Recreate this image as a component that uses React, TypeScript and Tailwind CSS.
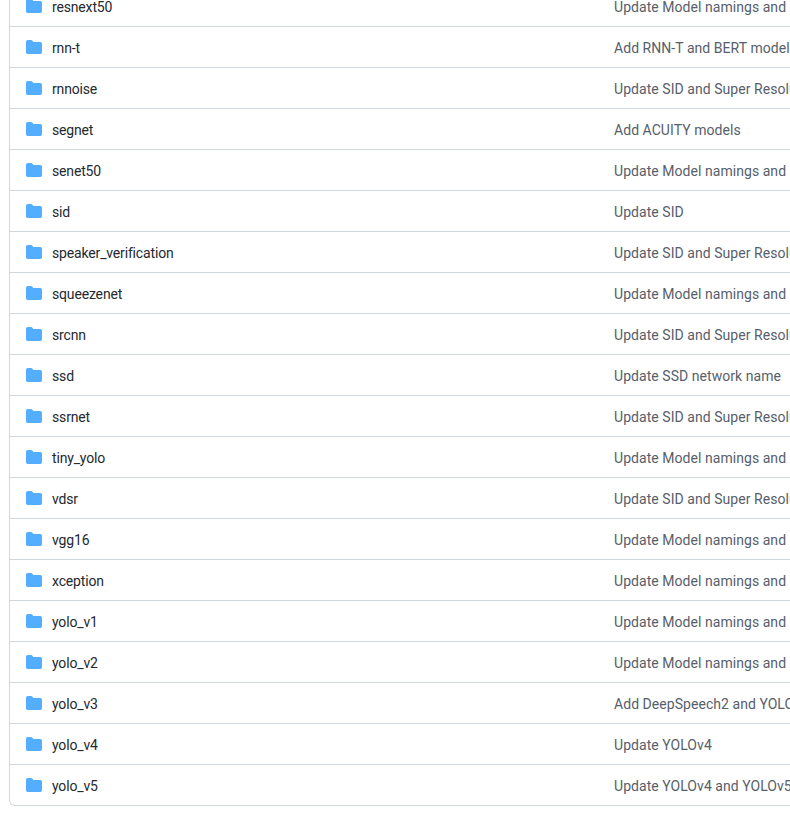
const rows: [string, string][] = [
  ["resnext50", "Update Model namings and links"],
  ["rnn-t", "Add RNN-T and BERT models"],
  ["rnnoise", "Update SID and Super Resolution"],
  ["segnet", "Add ACUITY models"],
  ["senet50", "Update Model namings and links"],
  ["sid", "Update SID"],
  ["speaker_verification", "Update SID and Super Resolution"],
  ["squeezenet", "Update Model namings and links"],
  ["srcnn", "Update SID and Super Resolution"],
  ["ssd", "Update SSD network name"],
  ["ssrnet", "Update SID and Super Resolution"],
  ["tiny_yolo", "Update Model namings and links"],
  ["vdsr", "Update SID and Super Resolution"],
  ["vgg16", "Update Model namings and links"],
  ["xception", "Update Model namings and links"],
  ["yolo_v1", "Update Model namings and links"],
  ["yolo_v2", "Update Model namings and links"],
  ["yolo_v3", "Add DeepSpeech2 and YOLOv3"],
  ["yolo_v4", "Update YOLOv4"],
  ["yolo_v5", "Update YOLOv4 and YOLOv5"],
];

function FolderIcon() {
  return (
    <svg viewBox="0 0 16 16" width="16" height="16" className="shrink-0 fill-[#54aeff]">
      <path d="M1.75 1A1.75 1.75 0 0 0 0 2.75v10.5C0 14.216.784 15 1.75 15h12.5A1.75 1.75 0 0 0 16 13.25v-8.5A1.75 1.75 0 0 0 14.25 3H7.5a.25.25 0 0 1-.2-.1l-.9-1.2C6.07 1.26 5.55 1 5 1H1.75Z" />
    </svg>
  );
}

export default function App() {
  return (
    <div className="h-[826px] w-[790px] overflow-hidden bg-white font-['Roboto',sans-serif] text-sm">
      <div className="-mt-[15px] ml-[9px] w-[1000px] rounded-b-md border-x border-b border-[#d0d7de]">
        {rows.map(([name, message], i) => (
          <div
            key={name}
            className={`flex h-[41px] items-center pl-4 ${i > 0 ? "border-t border-[#d0d7de]" : ""}`}
          >
            <FolderIcon />
            <span className="ml-[10px] w-[562px] shrink-0 pt-[2px] tracking-[-0.16px] text-[#24292f]">{name}</span>
            <span className="whitespace-nowrap pt-[2px] tracking-[0.05px] text-[#57606a]">{message}</span>
          </div>
        ))}
      </div>
    </div>
  );
}
